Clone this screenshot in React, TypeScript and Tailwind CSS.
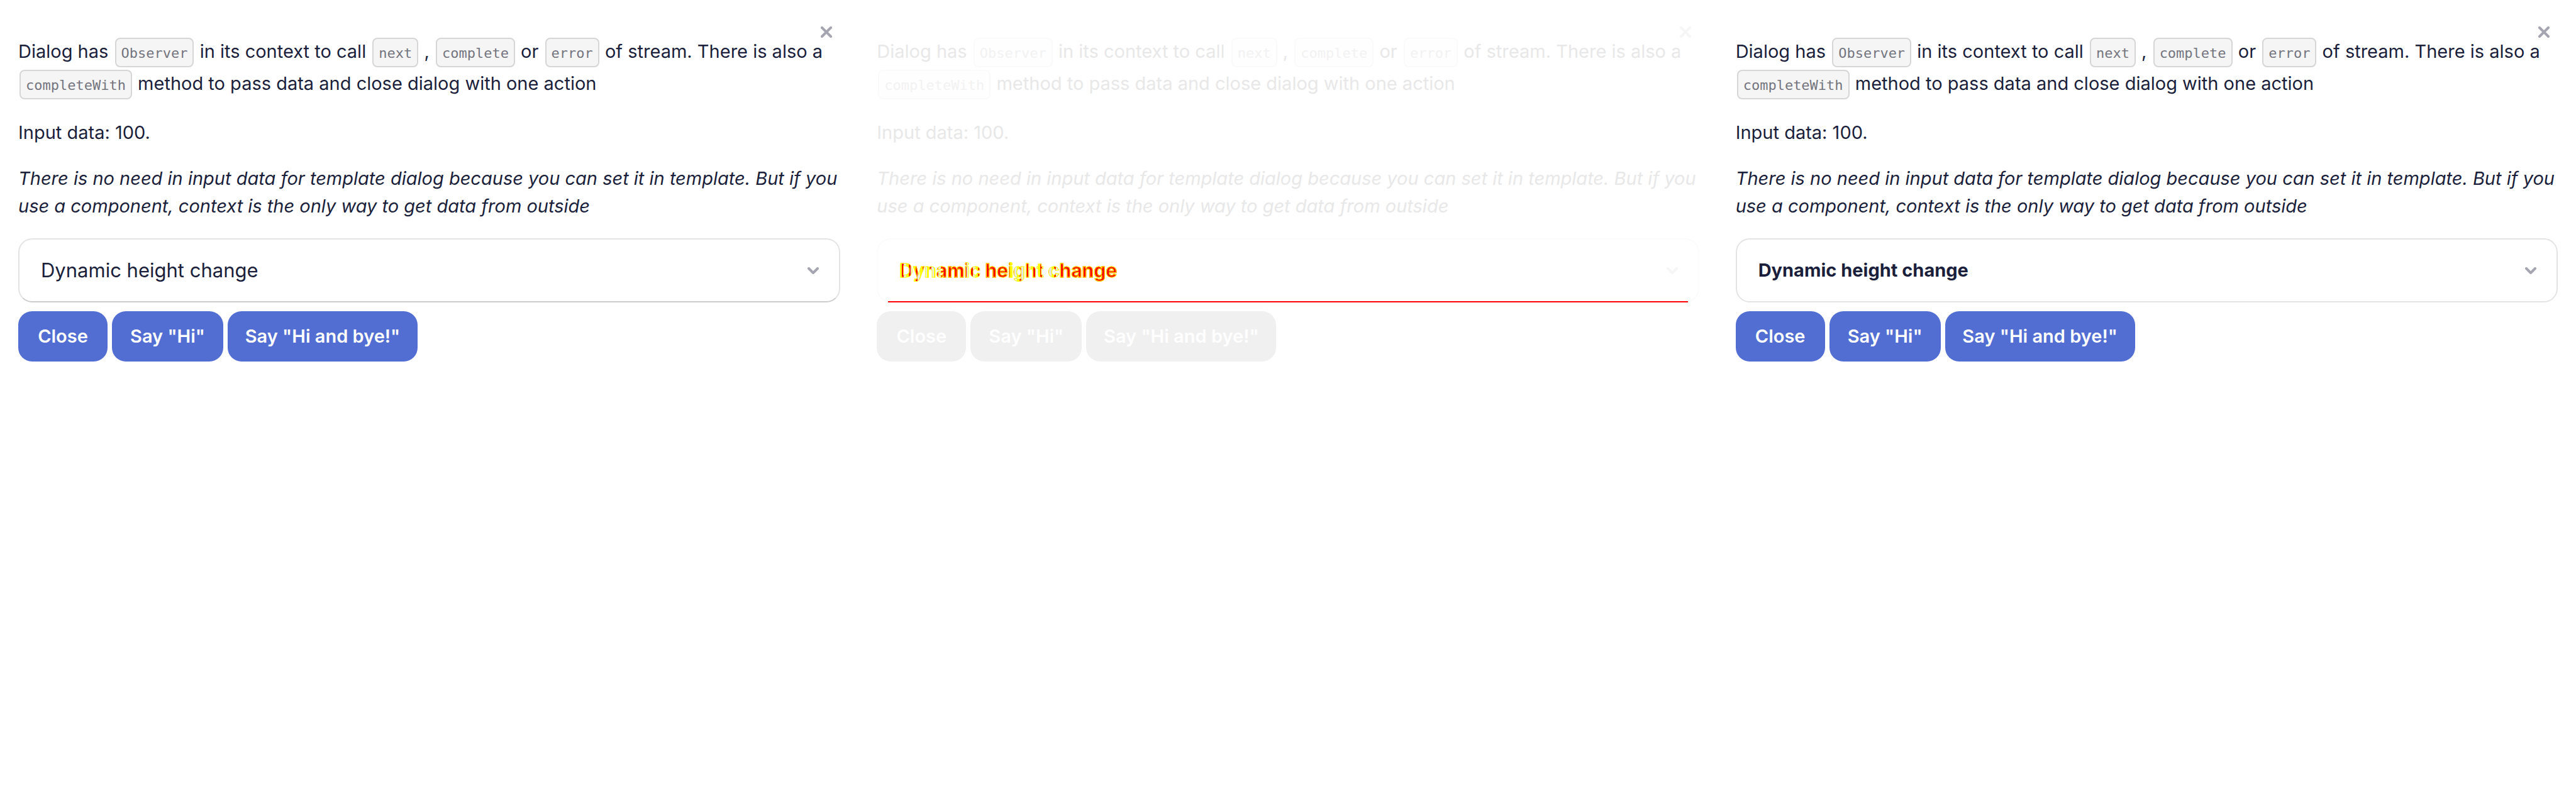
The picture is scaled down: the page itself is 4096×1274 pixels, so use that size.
import React from 'react';
import clsx from 'clsx';

type Tone = 'normal' | 'faded';

function Code({ tone, children }: { tone: Tone; children: string }) {
  return (
    <code
      className={clsx(
        'mr-px ml-[2px] inline-block rounded-[8px] border-2 px-[8px] pt-[2px] font-["DejaVu_Sans_Mono",monospace] text-[22px] leading-[41px]',
        tone === 'normal'
          ? 'border-[#d6d6d6] bg-[#f5f5f5] text-[#74757f]'
          : 'border-[#fafafa] bg-[#fefefe] text-[#f2f2f2]',
      )}
    >
      {children}
    </code>
  );
}

function CloseIcon() {
  return (
    <svg viewBox="0 0 18 18" className="size-[18px]" fill="none" stroke="currentColor" strokeWidth="4" strokeLinecap="round" aria-hidden="true">
      <path d="M2 2l14 14M16 2L2 16" />
    </svg>
  );
}

function ChevronIcon() {
  return (
    <svg viewBox="0 0 18 11" className="h-[11px] w-[18px]" fill="none" stroke="currentColor" strokeWidth="4" strokeLinecap="round" strokeLinejoin="round" aria-hidden="true">
      <path d="M2 2l7 7 7-7" />
    </svg>
  );
}

const TITLE = 'Dynamic height change';

/* Strongly changed glyphs are filled red; the others are grey with red and yellow streaks. */
function DiffTitle() {
  return (
    <span className="bg-[linear-gradient(90deg,transparent_19%,#ff0000_19%_31%,transparent_31%_38%,#ff0000_38%_51%,transparent_51%_73%,#ff0000_73%),repeating-linear-gradient(90deg,#ffff00_0_4px,#ff0000_4px_7px,#e8e8e8_7px_11px)] bg-clip-text text-[30px] font-bold text-transparent [-webkit-text-stroke:1px_#ffff00]">
      {TITLE}
    </span>
  );
}

function ActionButton({ tone, className, children }: { tone: Tone; className: string; children: string }) {
  return (
    <button
      type="button"
      className={clsx(
        'h-[80px] rounded-[22px] text-center text-[29px] font-semibold whitespace-nowrap',
        tone === 'normal' ? 'bg-[#526ed3] text-white' : 'bg-[#f0f0f0] text-[#fefefe]',
        className,
      )}
    >
      {children}
    </button>
  );
}

function DialogPanel({ tone, accordionClass, title }: { tone: Tone; accordionClass: string; title: React.ReactNode }) {
  const faded = tone === 'faded';
  return (
    <section
      className={clsx(
        'relative px-[29px] pt-[56px] text-[29px] leading-[44px]',
        faded ? 'text-[#e8e8e8]' : 'text-[#1b1f3b]',
      )}
    >
      <button
        type="button"
        aria-label="Close dialog"
        className={clsx(
          'absolute top-[29px] right-[29px] flex size-[44px] items-center justify-center',
          faded ? 'text-[#f6f6f6]' : 'text-[#a4a5b1]',
        )}
      >
        <CloseIcon />
      </button>
      <p className="leading-[51px] whitespace-nowrap">
        Dialog has <Code tone={tone}>Observer</Code> in its context to call <Code tone={tone}>next</Code> ,{' '}
        <Code tone={tone}>complete</Code> or <Code tone={tone}>error</Code> of stream. There is also a
        <br />
        <Code tone={tone}>completeWith</Code> method to pass data and close dialog with one action
      </p>
      <p className="mt-[31px]">Input data: 100.</p>
      <p className="mt-[29px] whitespace-nowrap italic">
        There is no need in input data for template dialog because you can set it in template. But if you
        <br />
        use a component, context is the only way to get data from outside
      </p>
      <button
        type="button"
        aria-expanded="false"
        className={clsx(
          'relative mt-[29px] flex h-[102px] w-full items-center justify-between rounded-[22px] border-2 pr-[32px] pl-[34px] text-left',
          accordionClass,
        )}
      >
        {title}
        <span className={faded ? 'text-[#f6f6f6]' : 'text-[#a4a5b1]'}>
          <ChevronIcon />
        </span>
        {faded && <span className="absolute inset-x-[16px] -bottom-[2px] h-[2px] bg-[#ff0000]" />}
      </button>
      <div className="mt-[14px] flex gap-[7px]">
        <ActionButton tone={tone} className="w-[142px]">Close</ActionButton>
        <ActionButton tone={tone} className="w-[177px]">Say "Hi"</ActionButton>
        <ActionButton tone={tone} className="w-[302px]">Say "Hi and bye!"</ActionButton>
      </div>
    </section>
  );
}

export default function App() {
  return (
    <main className="grid min-h-screen grid-cols-3 bg-white font-[Inter,sans-serif]">
      <DialogPanel
        tone="normal"
        accordionClass="border-[#e4e4e4] border-b-[#cdcdcd]"
        title={<span className="text-[31px]">{TITLE}</span>}
      />
      <DialogPanel tone="faded" accordionClass="border-[#fbfbfb]" title={<DiffTitle />} />
      <DialogPanel
        tone="normal"
        accordionClass="border-[#e4e4e4]"
        title={<span className="text-[29px] font-bold">{TITLE}</span>}
      />
    </main>
  );
}
